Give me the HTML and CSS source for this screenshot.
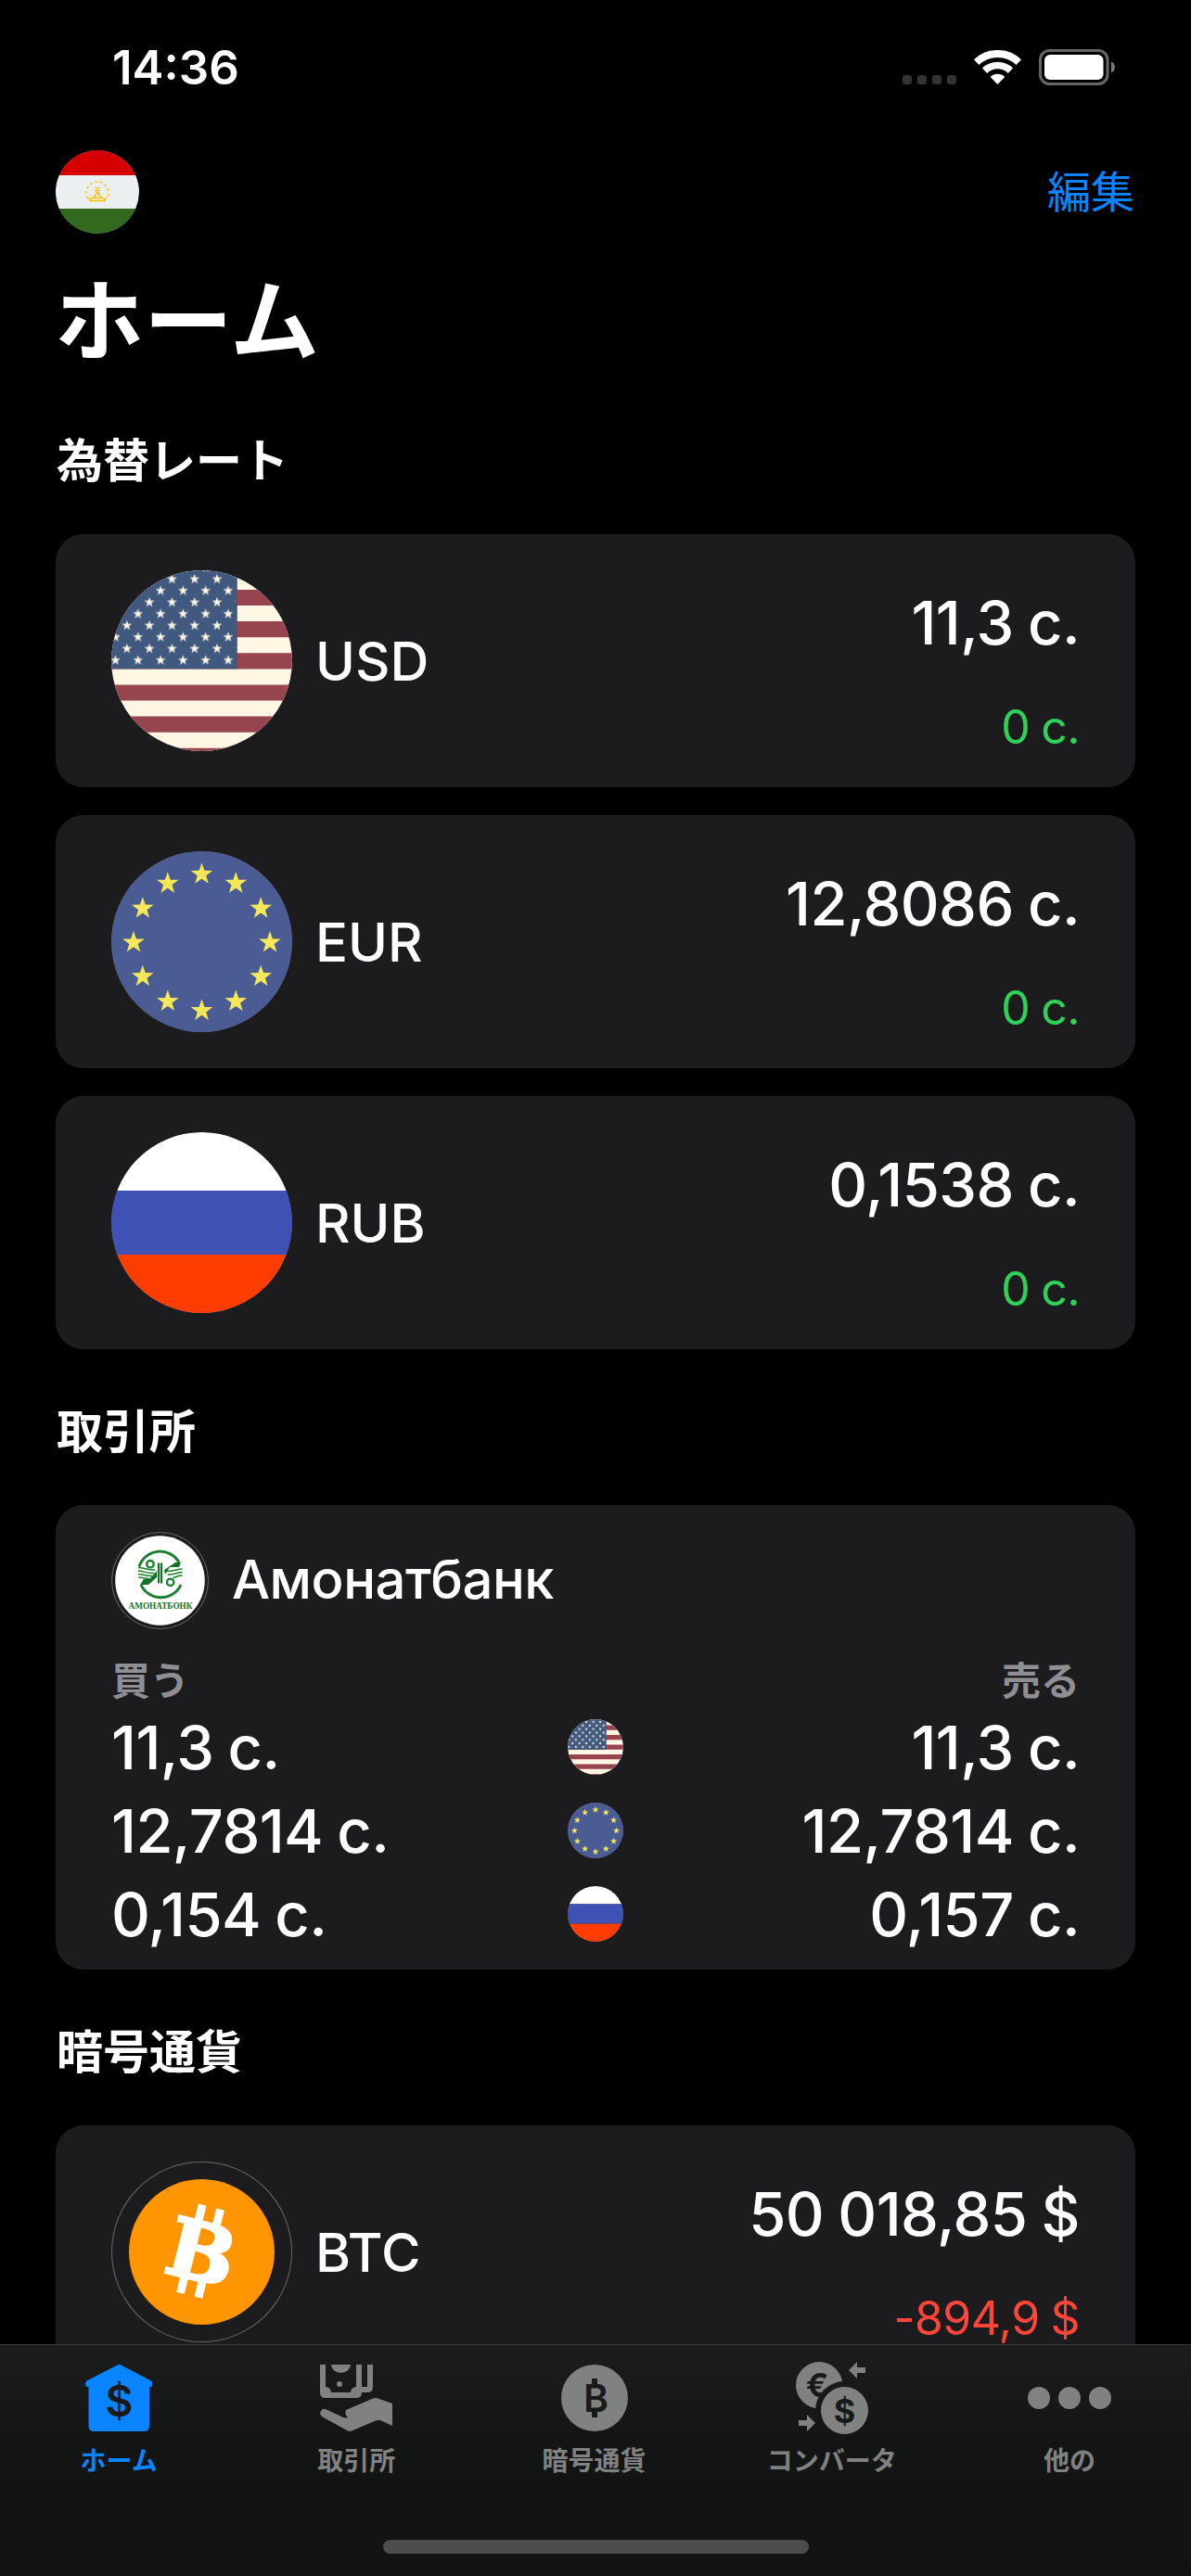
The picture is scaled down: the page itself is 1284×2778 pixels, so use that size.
FILE: index.html
```html
<!DOCTYPE html>
<html lang="ja">
<head>
    <meta charset="UTF-8">
    <meta name="viewport" content="width=device-width, initial-scale=1.0">
    <title>ホーム</title>
    <link rel="stylesheet" href="styles.css">
</head>
<body>
    <!-- Shared flags -->
    <svg class="sprites" aria-hidden="true">
        <defs>
            <clipPath id="round"><circle cx="97.5" cy="97.5" r="97.5"/></clipPath>
            <polygon id="star" points="0,-1 0.235,-0.324 0.951,-0.309 0.38,0.124 0.588,0.809 0,0.4 -0.588,0.809 -0.38,0.124 -0.951,-0.309 -0.235,-0.324"/>
            <pattern id="us-stars" patternUnits="userSpaceOnUse" x="-1.6" y="3.5" width="24.3" height="25">
                <use href="#star" transform="translate(18.4 6.1) scale(5.6)" fill="#fff7e4"/>
                <use href="#star" transform="translate(6.1 18.6) scale(5.6)" fill="#fff7e4"/>
            </pattern>
        </defs>
        <symbol id="flag-us" viewBox="0 0 195 195">
            <g clip-path="url(#round)">
                <rect width="195" height="195" fill="#fff7e4"/>
                <path fill="#96444d" d="M0 21h195v17.1H0zM0 55.1h195v17.1H0zM0 89.3h195v17.1H0zM0 123.4h195v17.1H0zM0 157.6h195v17.1H0zM0 191.7h195v17.1H0z"/>
                <rect width="135.8" height="106.4" fill="#41597f"/>
                <rect width="134" height="104" fill="url(#us-stars)"/>
            </g>
        </symbol>
        <symbol id="flag-eu" viewBox="0 0 195 195">
            <circle cx="97.5" cy="97.5" r="97.5" fill="#4b5c94"/>
            <g fill="#f5e858">
                <use href="#star" transform="translate(97.5 24.8) scale(12.4)"/>
                <use href="#star" transform="translate(134.3 34.7) scale(12.4)"/>
                <use href="#star" transform="translate(161.2 61.6) scale(12.4)"/>
                <use href="#star" transform="translate(171 98.4) scale(12.4)"/>
                <use href="#star" transform="translate(161.2 135.1) scale(12.4)"/>
                <use href="#star" transform="translate(134.3 162) scale(12.4)"/>
                <use href="#star" transform="translate(97.5 171.9) scale(12.4)"/>
                <use href="#star" transform="translate(60.8 162) scale(12.4)"/>
                <use href="#star" transform="translate(33.8 135.1) scale(12.4)"/>
                <use href="#star" transform="translate(24 98.4) scale(12.4)"/>
                <use href="#star" transform="translate(33.8 61.6) scale(12.4)"/>
                <use href="#star" transform="translate(60.8 34.7) scale(12.4)"/>
            </g>
        </symbol>
        <symbol id="flag-ru" viewBox="0 0 195 195">
            <g clip-path="url(#round)">
                <rect width="195" height="63" fill="#fff"/>
                <rect y="63" width="195" height="69" fill="#3f51b5"/>
                <rect y="132" width="195" height="63" fill="#ff3d00"/>
            </g>
        </symbol>
    </svg>

    <header class="status-bar">
        <span class="time">14:36</span>
        <div class="status-icons">
            <svg class="signal" width="58" height="10" viewBox="0 0 58 10" fill="#333">
                <rect width="10" height="10" rx="3"/><rect x="16" width="10" height="10" rx="3"/>
                <rect x="32" width="10" height="10" rx="3"/><rect x="48" width="10" height="10" rx="3"/>
            </svg>
            <svg class="wifi" width="51" height="37" viewBox="0 0 51 37" fill="none">
                <path d="M2.7 13.1a33 33 0 0 1 45.6 0" stroke="#fff" stroke-width="8"/>
                <path d="M11.6 22.2a20 20 0 0 1 27.8 0" stroke="#fff" stroke-width="7.5"/>
                <path d="M25.5 37l-7.8-8a11 11 0 0 1 15.6 0z" fill="#fff"/>
            </svg>
            <svg class="battery" width="82" height="39" viewBox="0 0 82 39">
                <rect x="1.5" y="1.5" width="72.5" height="36" rx="10" fill="none" stroke="#666" stroke-width="3"/>
                <rect x="6" y="6" width="63.5" height="27" rx="6" fill="#fff"/>
                <path d="M78 13.5c5.3 2 5.3 10 0 12z" fill="#777"/>
            </svg>
        </div>
    </header>

    <nav class="nav-bar">
        <svg class="flag flag-nav" viewBox="0 0 90 90">
            <clipPath id="round-nav"><circle cx="45" cy="45" r="45"/></clipPath>
            <g clip-path="url(#round-nav)">
                <rect width="90" height="27" fill="#d50000"/>
                <rect y="27" width="90" height="36" fill="#ebeff2"/>
                <rect y="63" width="90" height="27" fill="#33691e"/>
            </g>
            <g fill="none" stroke="#ffc107" stroke-width="1.5">
                <path d="M34.5 52a12 12 0 1 1 21 0" stroke-dasharray="2.5 3"/>
                <path d="M36 54.5h18M38 51.5h14M41 51l4-6 4 6M42 43.5h6M43 41h4M35 51l4 3.5M55 51l-4 3.5"/>
            </g>
        </svg>
        <a class="edit">編集</a>
    </nav>

    <main>
        <h1>ホーム</h1>

        <section>
            <h2>為替レート</h2>
            <div class="cards">
                <div class="card rate">
                    <svg class="flag"><use href="#flag-us"/></svg>
                    <span class="code">USD</span>
                    <div class="values">
                        <span class="amount">11,3 с.</span>
                        <span class="change up">0 с.</span>
                    </div>
                </div>
                <div class="card rate">
                    <svg class="flag"><use href="#flag-eu"/></svg>
                    <span class="code">EUR</span>
                    <div class="values">
                        <span class="amount">12,8086 с.</span>
                        <span class="change up">0 с.</span>
                    </div>
                </div>
                <div class="card rate">
                    <svg class="flag"><use href="#flag-ru"/></svg>
                    <span class="code">RUB</span>
                    <div class="values">
                        <span class="amount">0,1538 с.</span>
                        <span class="change up">0 с.</span>
                    </div>
                </div>
            </div>
        </section>

        <section>
            <h2>取引所</h2>
            <div class="card bank">
                <div class="bank-head">
                    <svg class="bank-logo" viewBox="0 0 105 105">
                        <circle cx="52.5" cy="52.5" r="52" fill="none" stroke="#6a6a6c"/>
                        <circle cx="52.5" cy="52.5" r="48.3" fill="#fff"/>
                        <g fill="none" stroke="#1d8030" stroke-width="3">
                            <path d="M30 37.5a23.6 23.6 0 0 1 43-4.5"/>
                            <path d="M32 57a23.6 23.6 0 0 0 43 0"/>
                            <circle cx="42" cy="34.7" r="3.7" stroke-width="2.4"/>
                            <circle cx="63.7" cy="54.3" r="3.7" stroke-width="2.4"/>
                            <path d="M29 38.5c6 0 8 3 18 2.500M29 42c6 0 8 3 17 2.500M29 45.500c6 0 8 2.500 15 2M29.500 49c5 0 7 2 12 1.500M76.500 40c-6 0-8 3-18 2.500M76.500 43.500c-6 0-8 3-16 2.500M76.500 47c-6 0-6 2.500-10 2" stroke-width="1.500"/>
                        </g>
                        <path fill="#147228" d="M50 33.500h2.200v22H50zM53 33.500h2.200v22H53zM57 41l12-8h6l-2 5H63l-5 8zM49 42v7l-9 8H31l4-6h6z"/>
                        <text x="53" y="83" text-anchor="middle" textLength="69" lengthAdjust="spacingAndGlyphs" class="logo-text">АМОНАТБОНК</text>
                    </svg>
                    <span class="bank-name">Амонатбанк</span>
                </div>
                <div class="bank-labels"><span>買う</span><span>売る</span></div>
                <div class="bank-row">
                    <span class="amount">11,3 с.</span>
                    <svg class="flag flag-small"><use href="#flag-us"/></svg>
                    <span class="amount sell">11,3 с.</span>
                </div>
                <div class="bank-row">
                    <span class="amount">12,7814 с.</span>
                    <svg class="flag flag-small"><use href="#flag-eu"/></svg>
                    <span class="amount sell">12,7814 с.</span>
                </div>
                <div class="bank-row">
                    <span class="amount">0,154 с.</span>
                    <svg class="flag flag-small"><use href="#flag-ru"/></svg>
                    <span class="amount sell">0,157 с.</span>
                </div>
            </div>
        </section>

        <section>
            <h2>暗号通貨</h2>
            <div class="card rate">
                <svg class="flag" viewBox="0 0 195 195">
                    <circle cx="97.5" cy="97.5" r="78.5" fill="#ff9500"/>
                    <g transform="translate(97.5 97) rotate(14)" fill="#fff">
                        <text y="31.5" text-anchor="middle" class="coin-letter">B</text>
                        <path d="M-16-49h9v20h-9zM4-49h9v20H4zM-16 29h9v20h-9zM4 29h9v20H4z"/>
                    </g>
                </svg>
                <span class="code">BTC</span>
                <div class="values">
                    <span class="amount">50 018,85 $</span>
                    <span class="change down">-894,9 $</span>
                </div>
            </div>
        </section>
    </main>

    <footer class="tab-bar">
        <div class="tabs">
            <a class="tab active">
                <svg width="73" height="78" viewBox="0 -3 73 78">
                    <path fill="currentColor" d="M34 .8q2.5-1.5 5 0L71 17.500q3 3.500 0 6.500h-2v42q0 6-6 6H9.500q-6 0-6-6V24h-2q-3-3 0-6.500z"/>
                    <text x="36.5" y="56" text-anchor="middle" class="glyph glyph-home">$</text>
                </svg>
                <span>ホーム</span>
            </a>
            <a class="tab">
                <svg width="78" height="78" viewBox="0 -3 78 78" fill="currentColor">
                    <path d="M0 0v30q0 6 6 6h33q6 0 6-6h6q6 0 6-6V0h-6v24h-6V0h-6v24q-6 1-6 6H12q0-5-6-6V0H0z"/>
                    <path d="M12 0h21a10.5 9 0 0 1-21 0z"/>
                    <circle cx="21" cy="21" r="3"/>
                    <path d="M7 48.5l17 8q3 1.5 6 .5-4-3.500-2-8L56 37q4-2 8 0l14 5v24l-12-5.500q-3-1.500-6 0L34 71.500q-3 1-6-1L2 56q-3-3-1-6 2-3.500 6-1.500z"/>
                </svg>
                <span>取引所</span>
            </a>
            <a class="tab">
                <svg width="72" height="78" viewBox="0 -3 72 78">
                    <circle cx="36" cy="36" r="36" fill="currentColor"/>
                    <text x="37.5" y="51" text-anchor="middle" class="glyph glyph-coin">B</text>
                    <path class="glyph" d="M33 15h6v7h-6zM33 50h6v7h-6z"/>
                </svg>
                <span>暗号通貨</span>
            </a>
            <a class="tab">
                <svg width="78" height="78" viewBox="0 0 78 78" fill="currentColor">
                    <mask id="coin-gap">
                        <rect width="78" height="78" fill="#fff"/>
                        <circle cx="52.5" cy="52.5" r="31.5" fill="#000"/>
                    </mask>
                    <g mask="url(#coin-gap)">
                        <circle cx="25.2" cy="25.2" r="25.2"/>
                        <text x="23" y="38" text-anchor="middle" class="glyph glyph-small">€</text>
                    </g>
                    <circle cx="52.5" cy="52.5" r="25.5"/>
                    <text x="52.5" y="65.5" text-anchor="middle" class="glyph glyph-small">$</text>
                    <path d="M57 9l9-9v6h9v6h-9v6zM21 66l-9 9v-6H3v-6h9v-6z"/>
                </svg>
                <span>コンバータ</span>
            </a>
            <a class="tab">
                <svg width="90" height="78" viewBox="0 0 90 78" fill="currentColor">
                    <circle cx="12" cy="39" r="12"/><circle cx="45" cy="39" r="12"/><circle cx="78" cy="39" r="12"/>
                </svg>
                <span>他の</span>
            </a>
        </div>
        <div class="home-indicator"></div>
    </footer>
</body>
</html>
```

FILE: styles.css
```css
* {
    box-sizing: border-box;
}

body {
    margin: 0;
    height: 2778px;
    overflow: hidden;
    background-color: #000;
    color: #fff;
    font-family: Inter, 'Noto Sans CJK JP', sans-serif;
}

.sprites {
    position: absolute;
    width: 0;
    height: 0;
}

svg {
    display: block;
    flex-shrink: 0;
}

/* Status bar */
.status-bar {
    display: flex;
    justify-content: space-between;
    height: 141px;
    padding: 53px 82px 0 121px;
}

.time {
    font-size: 51px;
    font-weight: 600;
    line-height: 40px;
}

.status-icons {
    display: flex;
    align-items: flex-end;
    height: 39px;
}

.signal {
    margin: 0 19px 1px 0;
}

.wifi {
    margin: 0 19px 1px 0;
}

/* Navigation */
.nav-bar {
    display: flex;
    justify-content: space-between;
    align-items: center;
    height: 132px;
    padding: 0 61px 0 60px;
}

.edit {
    color: #0a84ff;
    font-size: 47px;
    line-height: 60px;
}

.flag {
    width: 195px;
    height: 195px;
    border-radius: 50%;
    box-shadow: inset 0 0 0 1px #6a6a6c;
}

.flag-nav {
    width: 90px;
    height: 90px;
}

.flag-small {
    width: 60px;
    height: 60px;
}

main {
    padding: 0 60px;
}

h1 {
    margin: 0 0 0 -1px;
    height: 150px;
    font-size: 96px;
    font-weight: 700;
    line-height: 147px;
}

h2 {
    margin: 0 0 0 1px;
    height: 168px;
    padding-top: 59px;
    font-size: 50px;
    font-weight: 700;
    line-height: 60px;
}

section:first-of-type h2 {
    height: 153px;
    padding-top: 44px;
}

.cards {
    display: flex;
    flex-direction: column;
    gap: 30px;
}

.card {
    background-color: #1c1c1e;
    border-radius: 30px;
}

.rate {
    display: flex;
    align-items: center;
    height: 273px;
    padding: 0 60px;
}

.code {
    margin-left: 25px;
    font-size: 58px;
    font-weight: 500;
}

.values {
    display: flex;
    flex-direction: column;
    align-items: flex-end;
    gap: 42px;
    margin: 21px 0 0 auto;
}

.amount {
    font-size: 65px;
    font-weight: 500;
    letter-spacing: -0.6px;
    line-height: 80px;
    white-space: pre;
    word-spacing: -1.5px;
}

.change {
    font-size: 50px;
    letter-spacing: -0.6px;
    line-height: 60px;
    word-spacing: -1.5px;
}

.up {
    color: #30d158;
}

.down {
    color: #ff453a;
}

/* Bank card */
.bank {
    height: 501px;
    padding: 29px 60px 0;
}

.bank-head {
    display: flex;
    align-items: center;
    gap: 25px;
    height: 105px;
}

.bank-logo {
    width: 105px;
    height: 105px;
}

.bank-name {
    padding-bottom: 3px;
    font-size: 58px;
    font-weight: 500;
    letter-spacing: -0.5px;
}

.logo-text {
    fill: #147228;
    font-family: 'Liberation Serif', serif;
    font-size: 11px;
    font-weight: 700;
}

.bank-labels {
    display: flex;
    justify-content: space-between;
    height: 82px;
    padding-top: 26px;
    color: #8e8e93;
    font-size: 42px;
    font-weight: 700;
    line-height: 60px;
}

.bank-row {
    display: grid;
    grid-template-columns: 1fr 60px 1fr;
    align-items: center;
    height: 90px;
}

.bank-row .amount {
    padding-top: 2px;
}

.sell {
    text-align: right;
}

.coin-letter {
    stroke: #fff;
    stroke-width: 3px;
    font-family: 'DejaVu Serif', serif;
    font-size: 86px;
    font-weight: 700;
}

/* Bottom tab bar */
.tab-bar {
    position: fixed;
    left: 0;
    right: 0;
    bottom: 0;
    height: 250px;
    border-top: 1px solid #3b3c3d;
    background: linear-gradient(#1b1d1c, #131514 45%, #111212);
}

.tabs {
    display: flex;
    height: 210px;
    padding: 18px 3px 0 0;
}

.tab {
    display: flex;
    flex: 1;
    flex-direction: column;
    align-items: center;
    gap: 9px;
    color: #808281;
    font-size: 28px;
    font-weight: 700;
    line-height: 40px;
}

.active {
    color: #0a84ff;
}

.glyph {
    fill: #181a19;
    font-family: Inter, sans-serif;
    font-weight: 600;
}

.glyph-home {
    font-size: 46px;
}

.glyph-coin {
    font-size: 41px;
}

.glyph-small {
    font-size: 36px;
    font-weight: 700;
}

.home-indicator {
    width: 459px;
    height: 15px;
    margin: 0 auto;
    border-radius: 8px;
    background-color: #4d4d4d;
}
```
